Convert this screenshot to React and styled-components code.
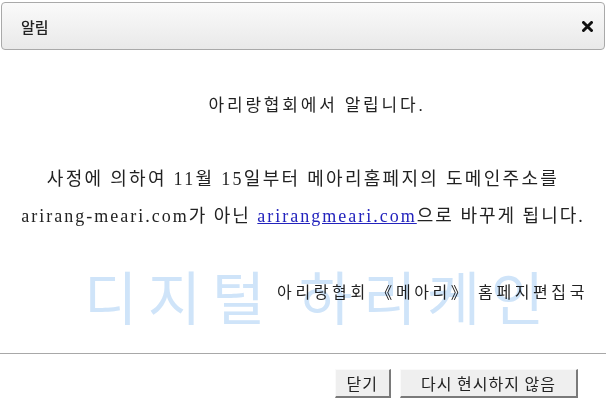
import React from "react";
import styled, { createGlobalStyle } from "styled-components";

const GlobalStyle = createGlobalStyle`
  html, body {
    margin: 0;
    padding: 0;
    background: #fff;
  }
`;

const Dialog = styled.div`
  position: relative;
  width: 606px;
  height: 419px;
  box-sizing: border-box;
  padding-top: 2px;
  background: #fff;
  overflow: hidden;
`;

const Header = styled.div`
  margin: 0 1px;
  height: 48px;
  box-sizing: border-box;
  border: 1px solid #a9a9a9;
  border-radius: 4px;
  background: linear-gradient(#fafafa, #e9e9e9);
  display: flex;
  align-items: center;
  justify-content: space-between;
  padding: 0 10px 0 19px;
`;

const Title = styled.span`
  font-family: "Noto Sans CJK KR", "Noto Sans", sans-serif;
  font-size: 15px;
  font-weight: 500;
  color: #222;
`;

const CloseButton = styled.button`
  border: 0;
  background: none;
  padding: 0;
  width: 14px;
  height: 14px;
  display: flex;
  align-items: center;
  justify-content: center;
  cursor: pointer;
`;

const Body = styled.div`
  padding-top: 44px;
  font-family: "Liberation Serif", "Noto Sans CJK KR", serif;
  color: #222;
`;

const Heading = styled.p`
  margin: 0;
  font-size: 17px;
  line-height: 24px;
  text-align: center;
  padding-left: 28px;
  letter-spacing: 2.8px;
`;

const Message = styled.p`
  margin: 43px 0 0;
  font-size: 18px;
  line-height: 37px;
  text-align: center;
  letter-spacing: 2px;
`;

const Line = styled.span`
  letter-spacing: ${p => p.$spacing}px;
`;

const Link = styled.a`
  color: #2323bd;
  text-decoration: underline;
`;

const Signature = styled.p`
  margin: 46px 0 0;
  font-size: 16px;
  line-height: 24px;
  text-align: right;
  padding-right: 18px;
  letter-spacing: 3.6px;
`;

const Divider = styled.hr`
  margin: 48px 0 0;
  border: 0;
  border-top: 1px solid #a8a8a8;
`;

const Actions = styled.div`
  display: flex;
  justify-content: flex-end;
  gap: 9px;
  padding: 15px 28px 0 0;
`;

const Button = styled.button`
  height: 29px;
  padding: 0 ${p => p.$pad}px;
  box-sizing: border-box;
  background: #efefef;
  border-style: solid;
  border-width: 1px 2px 2px 1px;
  border-color: #fafafa #7a7a7a #7a7a7a #fafafa;
  font-family: "Noto Sans CJK KR", "Noto Sans", sans-serif;
  font-size: 16px;
  color: #222;
  letter-spacing: 1px;
  cursor: pointer;
`;

const Watermark = styled.div`
  position: absolute;
  left: 84px;
  top: 253px;
  font-family: "Noto Sans CJK KR", "Noto Sans", sans-serif;
  font-size: 58px;
  font-weight: 400;
  letter-spacing: 10.5px;
  color: #cfe4f9;
  mix-blend-mode: multiply;
  white-space: nowrap;
  pointer-events: none;
`;

export default function App() {
  return (
    <>
      <GlobalStyle />
      <Dialog>
        <Header>
          <Title>알림</Title>
          <CloseButton aria-label="close">
            <svg width="11" height="11" viewBox="0 0 11 11">
              <path d="M1.5 1.5 L9.5 9.5 M9.5 1.5 L1.5 9.5" stroke="#111" strokeWidth="3" strokeLinecap="round" />
            </svg>
          </CloseButton>
        </Header>
        <Body>
          <Heading>아리랑협회에서 알립니다.</Heading>
          <Message>
            <Line $spacing={2.3}>사정에 의하여 11월 15일부터 메아리홈페지의 도메인주소를</Line>
            <br />
            arirang-meari.com가 아닌 <Link href="#">arirangmeari.com</Link>으로 바꾸게 됩니다.
          </Message>
          <Signature>아리랑협회 《메아리》 홈페지편집국</Signature>
        </Body>
        <Divider />
        <Actions>
          <Button $pad={11}>닫기</Button>
          <Button $pad={20}>다시 현시하지 않음</Button>
        </Actions>
        <Watermark>디지털 하리케인</Watermark>
      </Dialog>
    </>
  );
}
